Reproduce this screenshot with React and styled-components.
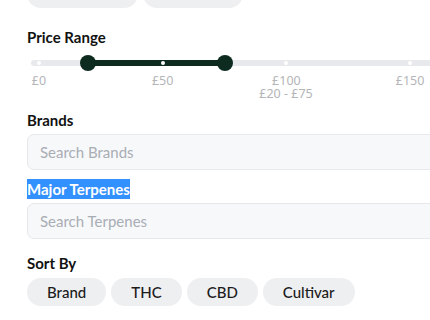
import React from "react";
import styled, { createGlobalStyle } from "styled-components";

const Global = createGlobalStyle`
  html, body { margin: 0; padding: 0; background: #ffffff; overflow: hidden; }
  body { font-family: Lato, "Noto Sans", sans-serif; color: #111; }
`;

const Page = styled.div`
  width: 518px;
  padding-left: 27px;
  display: flex;
  flex-direction: column;
`;

const ChipRow = styled.div`
  display: flex;
  gap: 5px;
  margin-top: ${(p) => p.$mt || 0}px;
`;

const Chip = styled.div`
  height: 28px;
  padding: 0 20px;
  min-width: ${(p) => p.$w || 0}px;
  box-sizing: border-box;
  border-radius: 14px;
  background: #eeeff1;
  display: flex;
  align-items: center;
  justify-content: center;
  font-size: 15px;
  font-weight: 500;
  color: #1b1b1b;
`;

const Title = styled.div`
  font-size: 15px;
  line-height: 20px;
  font-weight: 700;
  color: #121212;
  margin-top: ${(p) => p.$mt || 0}px;
`;

const Slider = styled.div`
  position: relative;
  width: 511px;
  margin-left: 4px;
  height: 16px;
  margin-top: ${(p) => p.$mt || 0}px;
`;

const Track = styled.div`
  position: absolute;
  left: 0;
  right: 0;
  top: 5px;
  height: 6px;
  border-radius: 3px;
  background: #e7e9ec;
`;

const Active = styled.div`
  position: absolute;
  top: 5px;
  height: 6px;
  background: #0d2b1f;
`;

const Dot = styled.div`
  position: absolute;
  top: 6px;
  width: 4px;
  height: 4px;
  margin-left: -2px;
  border-radius: 50%;
  background: #ffffff;
`;

const Thumb = styled.div`
  position: absolute;
  top: 0;
  width: 16px;
  height: 16px;
  margin-left: -8px;
  border-radius: 50%;
  background: #0d2b1f;
`;

const Labels = styled.div`
  position: relative;
  width: 511px;
  margin-left: 4px;
  height: 13px;
  margin-top: 3px;
`;

const Label = styled.span`
  position: absolute;
  top: 0;
  transform: translateX(-50%);
  font-family: "Noto Sans", sans-serif;
  font-size: 12.5px;
  line-height: 13px;
  color: #b3b5b9;
  white-space: nowrap;
`;

const RangeText = styled.div`
  text-align: center;
  font-family: "Noto Sans", sans-serif;
  font-size: 12.5px;
  line-height: 13px;
  color: #b3b5b9;
  margin-top: 0px;
`;

const Input = styled.input`
  box-sizing: border-box;
  width: 100%;
  height: 36px;
  border: 1px solid #e6e8eb;
  border-radius: 7px;
  background: #f7f8fa;
  padding: 0 12px;
  font-family: Lato, "Noto Sans", sans-serif;
  font-size: 15px;
  outline: none;
  margin-top: ${(p) => p.$mt || 0}px;
  &::placeholder { color: #a9adb4; }
`;

const Selected = styled.span`
  align-self: flex-start;
  background: #3390ff;
  color: #ffffff;
  font-size: 15px;
  line-height: 20px;
  font-weight: 700;
  margin-top: ${(p) => p.$mt || 0}px;
`;

const MIN_X = 8;
const PER = 123.7 / 50;
const pos = (v) => MIN_X + v * PER;

export default function App() {
  const ticks = [0, 50, 100, 150];
  const lo = 20;
  const hi = 75;
  return (
    <>
      <Global />
      <Page>
        <ChipRow $mt={-20}>
          <Chip $w={111} />
          <Chip $w={100} />
        </ChipRow>
        <Title $mt={19}>Price Range</Title>
        <Slider $mt={8}>
          <Track />
          {[...ticks, 200].map((t) => (
            <Dot key={t} style={{ left: pos(t) }} />
          ))}
          <Active style={{ left: pos(lo), width: pos(hi) - pos(lo) }} />
          <Dot style={{ left: pos(50) }} />
          <Thumb style={{ left: pos(lo) }} />
          <Thumb style={{ left: pos(hi) }} />
        </Slider>
        <Labels>
          {ticks.map((t) => (
            <Label key={t} style={{ left: pos(t) }}>£{t}</Label>
          ))}
        </Labels>
        <RangeText>£20 - £75</RangeText>
        <Title $mt={10}>Brands</Title>
        <Input $mt={4} placeholder="Search Brands" />
        <Selected $mt={9}>Major Terpenes</Selected>
        <Input $mt={4} placeholder="Search Terpenes" />
        <Title $mt={14}>Sort By</Title>
        <ChipRow $mt={5}>
          <Chip>Brand</Chip>
          <Chip>THC</Chip>
          <Chip>CBD</Chip>
          <Chip>Cultivar</Chip>
        </ChipRow>
      </Page>
    </>
  );
}
